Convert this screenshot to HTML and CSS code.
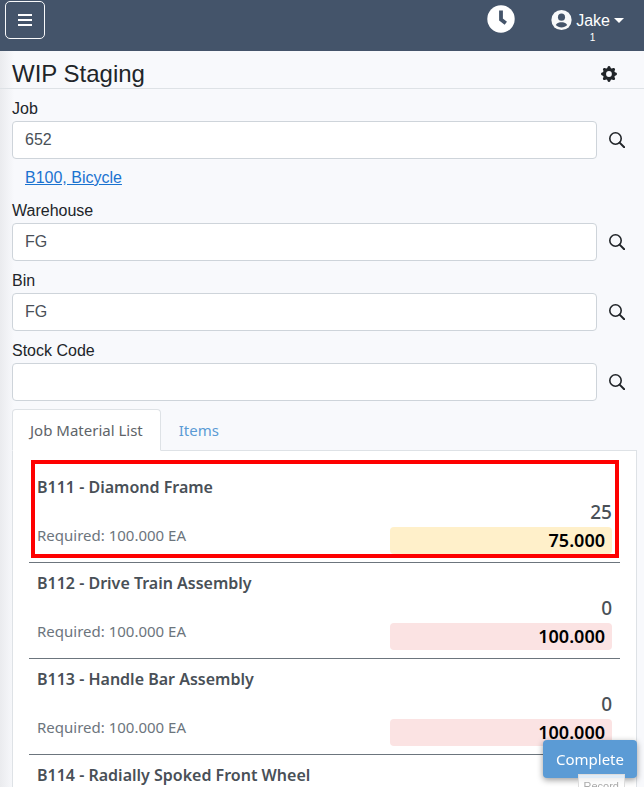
FILE: index.html
```html
<!DOCTYPE html>
<html lang="en">
<head>
<meta charset="utf-8">
<meta name="viewport" content="width=device-width, initial-scale=1">
<title>WIP Staging</title>
<link rel="stylesheet" href="styles.css">
</head>
<body>
<svg class="defs" aria-hidden="true">
  <symbol id="search" viewBox="0 0 16 16"><circle cx="6.500" cy="6.500" r="5.700" fill="none" stroke="currentColor" stroke-width="1.600"/><path d="M10.600 10.600l4.600 4.600" stroke="currentColor" stroke-width="2" stroke-linecap="round"/></symbol>
</svg>
<header class="topbar">
  <button class="menu" type="button" aria-label="Menu">
    <svg viewBox="0 0 14 13"><path d="M0 0h14v2H0zM0 5h14v2H0zM0 10h14v2H0z"/></svg>
  </button>
  <button class="clock" type="button" aria-label="Time">
    <svg viewBox="0 0 28 28"><circle cx="14" cy="14" r="13.700" fill="#fff"/><path d="M14 5.500v9l4.800 3.800" fill="none" stroke="#44546a" stroke-width="3.800"/></svg>
  </button>
  <button class="user" type="button">
    <span class="user-line">
      <svg class="avatar" viewBox="0 0 22 22"><circle cx="11" cy="11" r="10.600" fill="#f8f9fa"/><circle cx="11" cy="8" r="3.700" fill="#44546a"/><path d="M5 16.200C6.500 13.600 9 13.300 11 13.300s4.500.3 6 2.900c-1.600 1.700-3.600 2.600-6 2.600s-4.400-.9-6-2.600z" fill="#44546a"/></svg>
      <span>Jake</span>
      <span class="caret"></span>
    </span>
    <span class="count">1</span>
  </button>
</header>
<div class="titlebar">
  <h1>WIP Staging</h1>
  <button class="icon-button" type="button" aria-label="Settings">
    <svg viewBox="0 0 16 16"><path d="M9.405 1.050c-.413-1.400-2.397-1.400-2.810 0l-.1.340a1.464 1.464 0 0 1-2.105.872l-.310-.170c-1.283-.698-2.686.705-1.987 1.987l.169.311c.446.820.023 1.841-.872 2.105l-.340.100c-1.400.413-1.400 2.397 0 2.810l.340.100a1.464 1.464 0 0 1 .872 2.105l-.170.310c-.698 1.283.705 2.686 1.987 1.987l.311-.169a1.464 1.464 0 0 1 2.105.872l.100.340c.413 1.400 2.397 1.400 2.810 0l.100-.340a1.464 1.464 0 0 1 2.105-.872l.310.170c1.283.698 2.686-.705 1.987-1.987l-.169-.311a1.464 1.464 0 0 1 .872-2.105l.340-.100c1.400-.413 1.400-2.397 0-2.810l-.340-.100a1.464 1.464 0 0 1-.872-2.105l.170-.310c.698-1.283-.705-2.686-1.987-1.987l-.311.169a1.464 1.464 0 0 1-2.105-.872zM8 10.930a2.930 2.930 0 1 1 0-5.860 2.930 2.930 0 0 1 0 5.858z"/></svg>
  </button>
</div>
<main>
  <form class="fields">
    <div class="field">
      <label for="job">Job</label>
      <div class="entry"><input id="job" type="text" value="652"><button class="icon-button" type="button" aria-label="Find job"><svg><use href="#search"/></svg></button></div>
      <a class="detail" href="#">B100, Bicycle</a>
    </div>
    <div class="field">
      <label for="warehouse">Warehouse</label>
      <div class="entry"><input id="warehouse" type="text" value="FG"><button class="icon-button" type="button" aria-label="Find warehouse"><svg><use href="#search"/></svg></button></div>
    </div>
    <div class="field">
      <label for="bin">Bin</label>
      <div class="entry"><input id="bin" type="text" value="FG"><button class="icon-button" type="button" aria-label="Find bin"><svg><use href="#search"/></svg></button></div>
    </div>
    <div class="field">
      <label for="stock">Stock Code</label>
      <div class="entry"><input id="stock" type="text"><button class="icon-button" type="button" aria-label="Find stock code"><svg><use href="#search"/></svg></button></div>
    </div>
  </form>
  <nav class="tabs">
    <a class="tab active" href="#materials">Job Material List</a>
    <a class="tab" href="#items">Items</a>
  </nav>
  <section class="panel" id="materials">
    <article class="material marked">
      <h2>B111 - Diamond Frame</h2>
      <p class="required">Required: 100.000 EA</p>
      <div class="amounts"><span class="issued">25</span><span class="left partial">75.000</span></div>
    </article>
    <article class="material">
      <h2>B112 - Drive Train Assembly</h2>
      <p class="required">Required: 100.000 EA</p>
      <div class="amounts"><span class="issued">0</span><span class="left">100.000</span></div>
    </article>
    <article class="material">
      <h2>B113 - Handle Bar Assembly</h2>
      <p class="required">Required: 100.000 EA</p>
      <div class="amounts"><span class="issued">0</span><span class="left">100.000</span></div>
    </article>
    <article class="material">
      <h2>B114 - Radially Spoked Front Wheel</h2>
    </article>
  </section>
</main>
<button class="complete" type="button">Complete</button>
<div class="hint">Record</div>
</body>
</html>
```
FILE: styles.css
```css
* { box-sizing: border-box; }
html { scrollbar-width: none; }
body {
  margin: 0;
  background: #f8f9fc linear-gradient(to right, #eaebee, #f8f9fc 14px);
  color: #212529;
  font: 16px/24px "Liberation Sans", Arial, sans-serif;
}
button { padding: 0; border: 0; background: none; color: inherit; font: inherit; cursor: pointer; }
svg { display: block; fill: currentColor; }
h1, h2, p { margin: 0; }
.defs { display: none; }

.topbar {
  display: flex;
  align-items: flex-start;
  height: 51px;
  padding: 1px 20px 0 5px;
  background: #44546a;
  color: #fff;
}
.menu {
  display: grid;
  place-items: center;
  width: 40px;
  height: 38px;
  margin-right: auto;
  border: 1px solid #f8f9fa;
  border-radius: 5px;
}
.menu svg { width: 14px; height: 13px; }
.clock { margin: 4px 36px 0 0; }
.clock svg { width: 28px; height: 28px; }
.user { display: flex; flex-direction: column; align-items: center; padding-top: 7px; }
.user-line { display: flex; align-items: center; gap: 4px; }
.user-line span { line-height: 25px; }
.avatar { width: 21px; height: 22px; margin-top: -2px; }
.caret { border: 5px solid transparent; border-top-color: #fff; border-bottom: 0; }
.count { margin-left: 10px; font-size: 10px; line-height: 10px; }

.titlebar {
  display: flex;
  align-items: center;
  justify-content: space-between;
  height: 38px;
  padding: 8px 20px 0 12px;
  border-bottom: 1px solid #dee2e6;
}
h1 { font-size: 24px; font-weight: 400; line-height: 32px; }
.icon-button svg { width: 16px; height: 16px; }
.titlebar .icon-button { margin-right: 7px; }

main { padding: 7px 7px 0 12px; }
.field { margin-bottom: 7px; }
.field label { display: block; line-height: 25px; }
.entry { display: flex; align-items: center; gap: 12px; padding-right: 12px; }
.entry input {
  flex: 1;
  min-width: 0;
  height: 38px;
  padding: 0 12px;
  border: 1px solid #ced4da;
  border-radius: 4px;
  background: #fff;
  color: #495057;
  font: inherit;
}
.detail { display: block; width: max-content; padding: 7px 0 1px; margin-left: 13px; color: #1b73d0; }

.tabs, .panel, .complete { font-family: "Noto Sans", "Open Sans", sans-serif; }
.tabs { display: flex; margin-top: 8px; border-bottom: 1px solid #dee2e6; font-size: 15px; }
.tab {
  margin-bottom: -1px;
  padding: 8px 17px;
  border: 1px solid transparent;
  border-radius: 4px 4px 0 0;
  color: #5b9bd5;
  text-decoration: none;
  line-height: 24px;
}
.tab.active { border-color: #dee2e6 #dee2e6 #fff; background: #fff; color: #5e6469; }
.panel { padding: 16px; border: 1px solid #dee2e6; border-top: 0; background: #fff; }

.material {
  position: relative;
  display: grid;
  grid-template-columns: 1fr 222px;
  padding: 0 8px 8px;
  border-bottom: 1px solid #6c757d;
  color: #495057;
}
.material:last-child { padding-bottom: 0; border-bottom: 0; }
.material.marked::after {
  content: "";
  position: absolute;
  inset: -7px 1px 4px 2px;
  border: 4px solid #fe0000;
}
h2 { grid-column: 1 / -1; padding-top: 8px; font-size: 16px; font-weight: 600; line-height: 24px; }
.required { padding-top: 24px; color: #6c757d; font-size: 15px; }
.amounts { display: flex; flex-direction: column; text-align: right; }
.issued { font-size: 19px; font-weight: 500; line-height: 26px; padding-bottom: 2px; }
.left {
  padding: 0 7px;
  border-radius: 4px;
  background: #fbe3e3;
  color: #000;
  font-size: 18px;
  font-weight: 600;
  line-height: 27px;
}
.left.partial { background: #fff0ca; }

.complete {
  position: fixed;
  right: 7px;
  bottom: 9px;
  height: 38px;
  padding: 0 13px;
  border-radius: 4px;
  background: #5b9bd5;
  box-shadow: 0 2px 6px rgb(0 0 0 / 40%);
  color: #fff;
  font-size: 15px;
}
.hint {
  position: fixed;
  right: 19px;
  bottom: -9px;
  padding: 2px 5px 0;
  border: 1px solid #ddd;
  background: rgb(255 255 255 / 80%);
  color: #aaa;
  font-size: 11px;
  line-height: 18px;
}
```
